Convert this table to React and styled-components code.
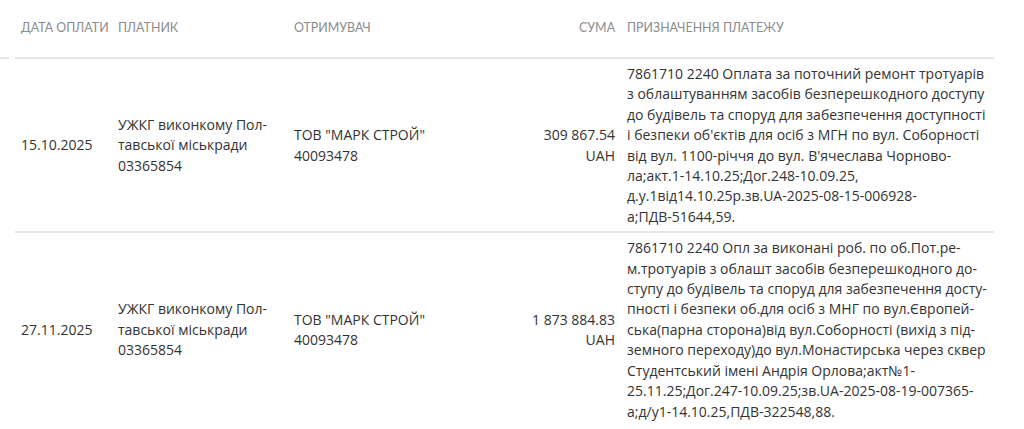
import React from "react";
import styled, { createGlobalStyle } from "styled-components";

const GlobalStyle = createGlobalStyle`
  html, body {
    margin: 0;
    padding: 0;
    background: #fff;
  }
  body {
    font-family: "Open Sans", "Noto Sans", sans-serif;
    color: #333;
  }
`;

const columns = "97px 176px 170px 163px 373px";

const Page = styled.div`
  width: 1024px;
`;

const HeadWrap = styled.div`
  display: flex;
  gap: 6px;
`;

const Stub = styled.div`
  width: 9px;
  border-bottom: 2px solid #e6e6e6;
`;

const HeadRow = styled.div`
  display: grid;
  grid-template-columns: ${columns};
  border-bottom: 2px solid #e6e6e6;
  padding: 18px 0 19px;
`;

const HeadCell = styled.div`
  padding: 0 6px;
  font-family: Lato, "Open Sans", sans-serif;
  font-size: 12.4px;
  line-height: 20px;
  color: #8c8c8c;
  text-transform: uppercase;
  white-space: nowrap;
  text-align: ${(p) => (p.$right ? "right" : "left")};
`;

const Body = styled.div`
  margin-left: 15px;
  width: 979px;
`;

const Row = styled.div`
  display: grid;
  grid-template-columns: ${columns};
  align-items: center;
  padding: 5px 0 4px;
  border-bottom: ${(p) => (p.$last ? "none" : "2px solid #e6e6e6")};
`;

const Cell = styled.div`
  padding: 0 6px;
  font-size: 14px;
  line-height: 20.4px;
  color: #333;
  text-align: ${(p) => (p.$right ? "right" : "left")};
`;

const Line = styled.div`
  white-space: nowrap;
`;

const payments = [
  {
    date: "15.10.2025",
    amount: "309 867.54",
    purpose:
      "7861710 2240 Оплата за поточний ремонт тротуарів з облаштуванням засобів безперешкодного доступу до будівель та споруд для забезпечення доступності і безпеки об'єктів для осіб з МГН по вул. Соборності від вул. 1100-річчя до вул. В'ячеслава Чорново\u00ADла;акт.1-14.10.25;Дог.248-10.09.25, д.у.1від14.10.25р.зв.UA-2025-08-15-006928-а;ПДВ-51644,59.",
  },
  {
    date: "27.11.2025",
    amount: "1 873 884.83",
    purpose:
      "7861710 2240 Опл за виконані роб. по об.Пот.ре\u00ADм.тротуарів з облашт засобів безперешкодного до\u00ADступу до будівель та споруд для забезпечення досту\u00ADпності і безпеки об.для осіб з МНГ по вул.Європей\u00ADська(парна сторона)від вул.Соборності (вихід з під\u00ADземного переходу)до вул.Монастирська через сквер Студентський імені Андрія Орлова;акт№1-25.11.25;Дог.247-10.09.25;зв.UA-2025-08-19-007365-а;д/у1-14.10.25,ПДВ-322548,88.",
  },
];

export default function App() {
  return (
    <Page>
      <GlobalStyle />
      <HeadWrap>
        <Stub />
        <HeadRow>
          <HeadCell>Дата оплати</HeadCell>
          <HeadCell>Платник</HeadCell>
          <HeadCell>Отримувач</HeadCell>
          <HeadCell $right>Сума</HeadCell>
          <HeadCell>Призначення платежу</HeadCell>
        </HeadRow>
      </HeadWrap>
      <Body>
        {payments.map((p, i) => (
          <Row key={p.date} $last={i === payments.length - 1}>
            <Cell>{p.date}</Cell>
            <Cell>
              УЖКГ виконкому Пол{"\u00AD"}тавської міськради 03365854
            </Cell>
            <Cell>
              ТОВ "МАРК СТРОЙ" 40093478
            </Cell>
            <Cell $right>
              <Line>{p.amount}</Line>
              <Line>UAH</Line>
            </Cell>
            <Cell>{p.purpose}</Cell>
          </Row>
        ))}
      </Body>
    </Page>
  );
}
